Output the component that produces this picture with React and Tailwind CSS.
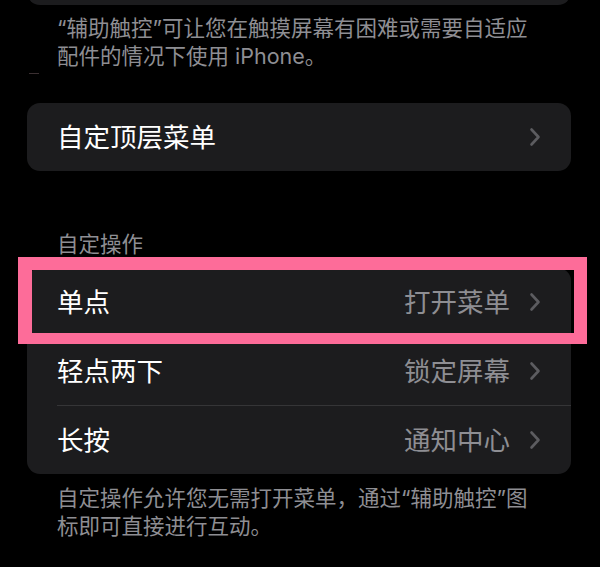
import React from 'react';

const font = { fontFamily: '"Inter", "Noto Sans CJK SC", sans-serif' };

function Chevron() {
  return (
    <svg width="12" height="20" viewBox="0 0 12 20" className="shrink-0">
      <path d="M2.5 2.5 L9.5 10 L2.5 17.5" fill="none" stroke="#5c5c60" strokeWidth="2.6" strokeLinecap="round" strokeLinejoin="round" />
    </svg>
  );
}

function Row({ label, value, last, highlight }) {
  return (
    <div className="relative">
      <div className="flex items-center h-[68px] pl-[30px] pr-[30px]">
        <div className="text-[26.5px] text-white leading-none">{label}</div>
        <div className="ml-auto flex items-center gap-[19px]">
          {value && <div className="text-[26.5px] text-[#8e8e93] leading-none">{value}</div>}
          <Chevron />
        </div>
      </div>
      {!last && <div className="ml-[30px] h-px bg-[#353537]" />}
      {highlight && (
        <div className="absolute left-[-9px] right-[-16px] top-[-11px] bottom-[-7px] border-[#fd6c99] border-l-[14px] border-r-[13px] border-t-[13px] border-b-[11px]" />
      )}
    </div>
  );
}

export default function App() {
  return (
    <div className="min-h-screen bg-black w-[600px] h-[567px] overflow-hidden" style={font}>
      {/* top card remnant */}
      <div className="h-[5px] overflow-hidden mx-[27px] w-[544px] flex items-end">
        <div className="h-[40px] w-full shrink-0 bg-[#1c1c1e] rounded-b-[13px]" />
      </div>

      <div className="pl-[57px] pt-[9px] text-[21.5px] leading-[28px] text-[#8e8e93] whitespace-nowrap">
        “辅助触控”可让您在触摸屏幕有困难或需要自适应
        <br />
        配件的情况下使用 iPhone。
      </div>

      <div className="ml-[29px] mt-[3px] w-[10px] h-px bg-[#3a2f31]" />

      <div className="mx-[27px] mt-[29px] w-[544px] bg-[#1c1c1e] rounded-[13px]">
        <Row label="自定顶层菜单" last />
      </div>

      <div className="pl-[57px] mt-[59px] text-[21.5px] leading-[28px] text-[#8e8e93]">自定操作</div>

      <div className="mx-[27px] mt-[10px] w-[544px] bg-[#1c1c1e] rounded-[13px]">
        <Row label="单点" value="打开菜单" highlight />
        <Row label="轻点两下" value="锁定屏幕" />
        <Row label="长按" value="通知中心" last />
      </div>

      <div className="pl-[57px] pt-[10px] text-[21.5px] leading-[28px] text-[#8e8e93] whitespace-nowrap">
        自定操作允许您无需打开菜单，通过“辅助触控”图
        <br />
        标即可直接进行互动。
      </div>
    </div>
  );
}
